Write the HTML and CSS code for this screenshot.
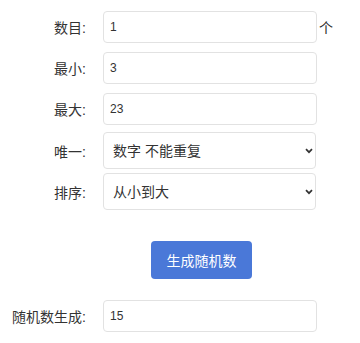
FILE: index.html
```html
<!DOCTYPE html>
<html lang="zh-CN">
<head>
<meta charset="utf-8">
<title>随机数生成</title>
<link rel="stylesheet" href="styles.css">
</head>
<body>
<div class="form">
  <div class="row row-input">
    <label class="lbl">数目:</label>
    <input class="field" type="text" value="1">
    <span class="unit">个</span>
  </div>
  <div class="row row-input">
    <label class="lbl">最小:</label>
    <input class="field" type="text" value="3">
  </div>
  <div class="row row-input row-last-input">
    <label class="lbl">最大:</label>
    <input class="field" type="text" value="23">
  </div>
  <div class="row row-select">
    <label class="lbl">唯一:</label>
    <div class="select-wrap">
      <select class="sel"><option>数字 不能重复</option></select>
      <svg class="chev" width="8" height="6" viewBox="0 0 8 6"><path d="M1 1.2 L4 4.2 L7 1.2" fill="none" stroke="#333" stroke-width="1.7"/></svg>
    </div>
  </div>
  <div class="row row-select row-last-select">
    <label class="lbl">排序:</label>
    <div class="select-wrap">
      <select class="sel"><option>从小到大</option></select>
      <svg class="chev" width="8" height="6" viewBox="0 0 8 6"><path d="M1 1.2 L4 4.2 L7 1.2" fill="none" stroke="#333" stroke-width="1.7"/></svg>
    </div>
  </div>
  <div class="actions">
    <button class="btn" type="button">生成随机数</button>
  </div>
  <div class="row row-input">
    <label class="lbl">随机数生成:</label>
    <input class="field" type="text" value="15">
  </div>
</div>
</body>
</html>
```
FILE: styles.css
```css
html, body {
  margin: 0;
  padding: 0;
  background: #fff;
}
body {
  font-family: "Liberation Sans", "Noto Sans CJK SC", sans-serif;
  color: #333;
}
.form {
  padding-top: 11px;
}
.row {
  display: grid;
  grid-template-columns: 86px 214px auto;
  column-gap: 17px;
  align-items: center;
}
.row-input {
  margin-bottom: 9px;
}
.row-last-input {
  margin-bottom: 7px;
}
.row-select {
  margin-bottom: 4px;
}
.row-last-select {
  margin-bottom: 31px;
}
.lbl {
  text-align: right;
  font-size: 14px;
  color: #333;
  white-space: nowrap;
}
.field {
  box-sizing: border-box;
  width: 214px;
  height: 32px;
  margin: 0;
  padding: 0 6px;
  border: 1px solid #e2e2e2;
  border-radius: 4px;
  font-family: "Liberation Sans", "Noto Sans CJK SC", sans-serif;
  font-size: 12px;
  color: #333;
  background: #fff;
  outline: none;
}
.unit {
  margin-left: -15px;
  font-size: 14px;
  color: #2a2a2a;
}
.select-wrap {
  position: relative;
  width: 213px;
  height: 37px;
}
.sel {
  box-sizing: border-box;
  appearance: none;
  -webkit-appearance: none;
  width: 213px;
  height: 37px;
  margin: 0;
  padding: 0 24px 0 9px;
  border: 1px solid #e2e2e2;
  border-radius: 4px;
  background: #fff;
  font-family: "Liberation Sans", "Noto Sans CJK SC", sans-serif;
  font-size: 14px;
  color: #333;
  outline: none;
}
.chev {
  position: absolute;
  right: 3px;
  top: 16px;
}
.actions {
  display: flex;
  padding-left: 151px;
  margin-bottom: 21px;
}
.btn {
  width: 101px;
  height: 38px;
  margin: 0;
  padding: 0;
  border: none;
  border-radius: 4px;
  background: #4a78d8;
  color: #fff;
  font-family: "Liberation Sans", "Noto Sans CJK SC", sans-serif;
  font-size: 14px;
}
```
